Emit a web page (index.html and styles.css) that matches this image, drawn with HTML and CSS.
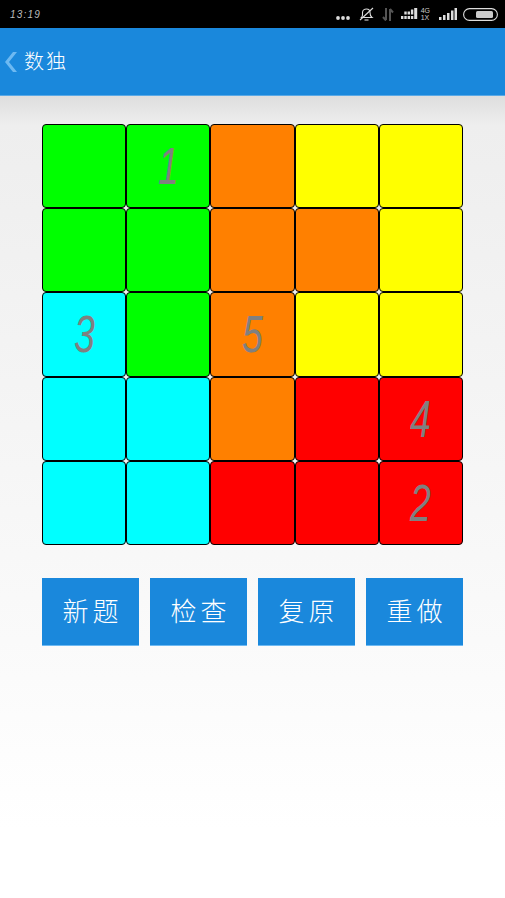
FILE: index.html
```html
<!DOCTYPE html>
<html lang="zh">
<head>
    <meta charset="UTF-8">
    <meta name="viewport" content="width=device-width, initial-scale=1.0">
    <title>数独</title>
    <link rel="stylesheet" href="styles.css">
</head>
<body>
    <div class="status-bar">
        <span class="time">13:19</span>
        <div class="status-icons">
            <svg class="more" width="14" height="6" viewBox="0 0 14 6"><circle cx="2" cy="3" r="1.9" fill="#ddd"/><circle cx="7" cy="3" r="1.9" fill="#ddd"/><circle cx="12" cy="3" r="1.9" fill="#ddd"/></svg>
            <svg class="bell" width="17" height="15" viewBox="0 0 17 15" fill="none" stroke="#ddd" stroke-width="1.1"><path d="M3.500 10.500c1.500-1.500 1-3 1-5s2-3.500 4-3.500 3.500 1.500 3.500 3.500 0 3.500 2 5z"/><path d="M6.500 13h4"/><path d="M2 13L15 1"/></svg>
            <svg class="arrows" width="12" height="13" viewBox="0 0 12 13" fill="none" stroke="#555" stroke-width="2"><path d="M4 0v12M1 9l3 3.500"/><path d="M8 13V1M8 1l3 3.500"/></svg>
            <svg class="dots" width="17" height="12" viewBox="0 0 17 12" fill="#ddd"><rect x="0" y="8" width="2.400" height="3"/><rect x="3.300" y="8" width="2.400" height="3"/><rect x="6.600" y="8" width="2.400" height="3"/><rect x="9.900" y="8" width="2.400" height="3"/><rect x="13.200" y="0" width="3" height="11"/><rect x="3.300" y="3.500" width="2.400" height="3"/><rect x="6.600" y="3.500" width="2.400" height="3"/><rect x="9.900" y="1.500" width="2.400" height="5"/></svg>
            <span class="net"><span>4G</span><span>1X</span></span>
            <svg class="bars" width="18" height="13" viewBox="0 0 18 13" fill="#ddd"><rect x="0" y="9" width="2.500" height="3"/><rect x="4" y="7" width="2.500" height="5"/><rect x="8" y="5" width="2.500" height="7"/><rect x="12" y="2.500" width="2.500" height="9.500"/><rect x="15.500" y="0" width="2.500" height="12"/></svg>
            <svg class="battery" width="35" height="13" viewBox="0 0 35 13"><rect x="0.600" y="0.600" width="33.800" height="11.800" rx="5.900" fill="none" stroke="#ddd" stroke-width="1.100"/><rect x="13" y="3" width="17" height="7" rx="1.500" fill="#ccc"/></svg>
        </div>
    </div>

    <header class="app-bar">
        <svg class="back" width="12" height="20" viewBox="0 0 12 20"><path d="M8 0h4L4 10l8 10H8L0 10z" fill="#6db9f2"/></svg>
        <span class="title">数独</span>
    </header>

    <main class="content">
        <div class="board">
            <div class="cell green"></div>
            <div class="cell green"><span class="num">1</span></div>
            <div class="cell orange"></div>
            <div class="cell yellow"></div>
            <div class="cell yellow"></div>

            <div class="cell green"></div>
            <div class="cell green"></div>
            <div class="cell orange"></div>
            <div class="cell orange"></div>
            <div class="cell yellow"></div>

            <div class="cell cyan"><span class="num">3</span></div>
            <div class="cell green"></div>
            <div class="cell orange"><span class="num">5</span></div>
            <div class="cell yellow"></div>
            <div class="cell yellow"></div>

            <div class="cell cyan"></div>
            <div class="cell cyan"></div>
            <div class="cell orange"></div>
            <div class="cell red"></div>
            <div class="cell red"><span class="num">4</span></div>

            <div class="cell cyan"></div>
            <div class="cell cyan"></div>
            <div class="cell red"></div>
            <div class="cell red"></div>
            <div class="cell red"><span class="num">2</span></div>
        </div>

        <div class="actions">
            <button>新题</button>
            <button>检查</button>
            <button>复原</button>
            <button>重做</button>
        </div>
    </main>
</body>
</html>
```

FILE: styles.css
```css
* {
    box-sizing: border-box;
}

body {
    margin: 0;
    height: 898px;
    overflow: hidden;
    font-family: "Noto Sans CJK SC", "Noto Sans", sans-serif;
    background: linear-gradient(#dedede 96px, #eeeeee 125px, #fafafa 640px, #ffffff 830px);
}

.status-bar {
    height: 28px;
    background-color: #000;
    display: flex;
    justify-content: space-between;
    align-items: center;
    padding: 0 7px 0 10px;
}

.time {
    color: #bbb;
    font-family: "Liberation Sans", sans-serif;
    font-size: 10px;
    font-style: italic;
    letter-spacing: 1.2px;
}

.status-icons {
    display: flex;
    align-items: center;
}

.more {
    margin-top: 8px;
}

.bell {
    margin-left: 8px;
}

.arrows {
    margin-left: 7px;
}

.dots {
    margin-left: 7px;
}

.net {
    display: flex;
    flex-direction: column;
    margin-left: 3px;
    color: #ccc;
    font-family: "Liberation Sans", sans-serif;
    font-size: 7px;
    line-height: 7px;
}

.bars {
    margin-left: 9px;
}

.battery {
    margin-left: 6px;
}

.app-bar {
    height: 68px;
    background-color: #1a88dc;
    border-bottom: 1px solid #5aa9e6;
    display: flex;
    align-items: center;
    padding-left: 5px;
}

.title {
    color: #fff;
    font-size: 20px;
    font-weight: 300;
    letter-spacing: 2px;
    margin: 0 0 3px 7px;
}

.content {
    padding: 28px 42px 0;
}

.board {
    display: grid;
    grid-template-columns: repeat(5, 1fr);
    grid-auto-rows: 84.2px;
    width: 421px;
}

.cell {
    border: 1px solid #000;
    border-radius: 4px;
    display: flex;
    justify-content: center;
    align-items: center;
    color: #808080;
    font-family: "Liberation Sans", sans-serif;
    font-size: 52px;
    font-style: italic;
}

/* the digits in the picture are narrow, hand-written ones */
.num {
    display: inline-block;
    transform: scaleX(0.72);
}

.green {
    background-color: #00ff00;
}

.orange {
    background-color: #ff8000;
}

.yellow {
    background-color: #ffff00;
}

.cyan {
    background-color: #00ffff;
}

.red {
    background-color: #ff0000;
}

.actions {
    display: flex;
    justify-content: space-between;
    margin-top: 33px;
}

.actions button {
    width: 97px;
    height: 68px;
    background-color: #1a88dc;
    border: none;
    border-bottom: 1px solid #6db9f2;
    padding: 0 0 3px;
    color: #fff;
    font-family: inherit;
    font-size: 26px;
    font-weight: 300;
    letter-spacing: 4px;
    text-indent: 4px;
}
```
